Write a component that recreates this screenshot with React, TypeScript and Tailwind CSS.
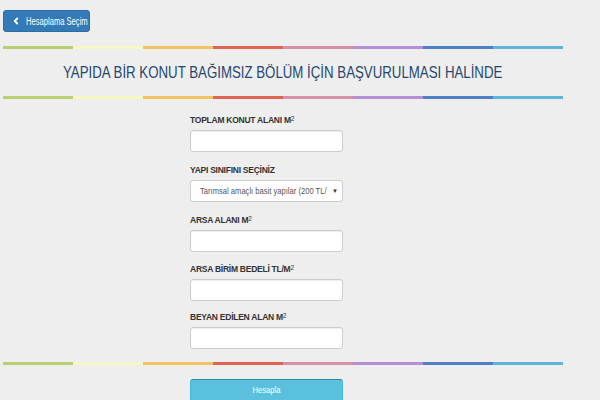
import React from 'react';
import { ChevronLeft } from 'lucide-react';

const barColors = [
    'bg-[#b8d06f]',
    'bg-[#f6f8c4]',
    'bg-[#f3c261]',
    'bg-[#df6452]',
    'bg-[#d88fa9]',
    'bg-[#b48ed6]',
    'bg-[#4c7fc6]',
    'bg-[#5cb6dc]',
];

const ColorBar: React.FC = () => (
    <div className="flex h-[3px] w-[560px]">
        {barColors.map((c, i) => (
            <div key={i} className={`flex-1 ${c}`} />
        ))}
    </div>
);

const Field: React.FC<{ label: React.ReactNode; mt: string; children?: React.ReactNode }> = ({ label, mt, children }) => (
    <div className={mt}>
        <label className="block h-[12px] text-[8.5px] leading-[12px] font-bold tracking-[-0.25px] text-[#333] whitespace-nowrap">{label}</label>
        <div className="mt-[4px]">
            {children ?? (
                <input className="block w-[153px] h-[22px] bg-white border border-[#ccc] rounded-[3px] shadow-[inset_0_1px_1px_rgba(0,0,0,0.075)] outline-none" />
            )}
        </div>
    </div>
);

const Sq: React.FC = () => <sup className="text-[6.5px] font-normal relative -top-[2px]">2</sup>;

export default function App() {
    return (
        <div className="w-[600px] h-[400px] bg-[#eeeeee] overflow-hidden font-['Liberation_Sans',Arial,sans-serif]">
            <div className="pl-[3px] pt-[10px]">
                <button className="flex items-center h-[22px] w-[87px] pl-[7px] bg-[#337ab7] border border-[#2e6da4] rounded-[3px] text-white whitespace-nowrap overflow-hidden">
                    <ChevronLeft className="w-[10px] h-[10px] shrink-0" strokeWidth={4.5} />
                    <span className="block text-[10px] scale-x-[0.76] origin-left ml-[5px]">Hesaplama Seçim</span>
                </button>

                <div className="mt-[14px]">
                    <ColorBar />
                </div>

                <div className="w-[560px] h-[47px] flex items-center justify-center">
                    <h1 className="text-[17px] text-[#25476f] whitespace-nowrap scale-x-[0.78] pt-[1px]">
                        YAPIDA BİR KONUT BAĞIMSIZ BÖLÜM İÇİN BAŞVURULMASI HALİNDE
                    </h1>
                </div>

                <ColorBar />

                <div className="pl-[187px]">
                    <Field mt="mt-[15px]" label={<>TOPLAM KONUT ALANI M<Sq /></>} />
                    <Field mt="mt-[12px]" label="YAPI SINIFINI SEÇİNİZ">
                        <div className="relative w-[153px] h-[22px] bg-white border border-[#ccc] rounded-[3px] flex items-center pl-[9px] overflow-hidden whitespace-nowrap">
                            <span className="block text-[9.5px] text-[#555] scale-x-[0.8] origin-left">Tarımsal amaçlı basit yapılar (200 TL/</span>
                            <span className="absolute right-[4px] top-[6px] text-[6px] text-[#333]">▼</span>
                        </div>
                    </Field>
                    <Field mt="mt-[12px]" label={<>ARSA ALANI M<Sq /></>} />
                    <Field mt="mt-[11px]" label={<>ARSA BİRİM BEDELİ TL/M<Sq /></>} />
                    <Field mt="mt-[10px]" label={<>BEYAN EDİLEN ALAN M<Sq /></>} />
                </div>

                <div className="mt-[13px]">
                    <ColorBar />
                </div>

                <div className="pl-[187px] mt-[14px]">
                    <button className="w-[153px] h-[24px] bg-[#5bc0de] border border-[#46b8da] border-t-[#2b8aa6] rounded-[3px] text-white flex justify-center pt-[3px]">
                        <span className="block text-[9.5px] scale-x-[0.8]">Hesapla</span>
                    </button>
                </div>
            </div>
        </div>
    );
}
